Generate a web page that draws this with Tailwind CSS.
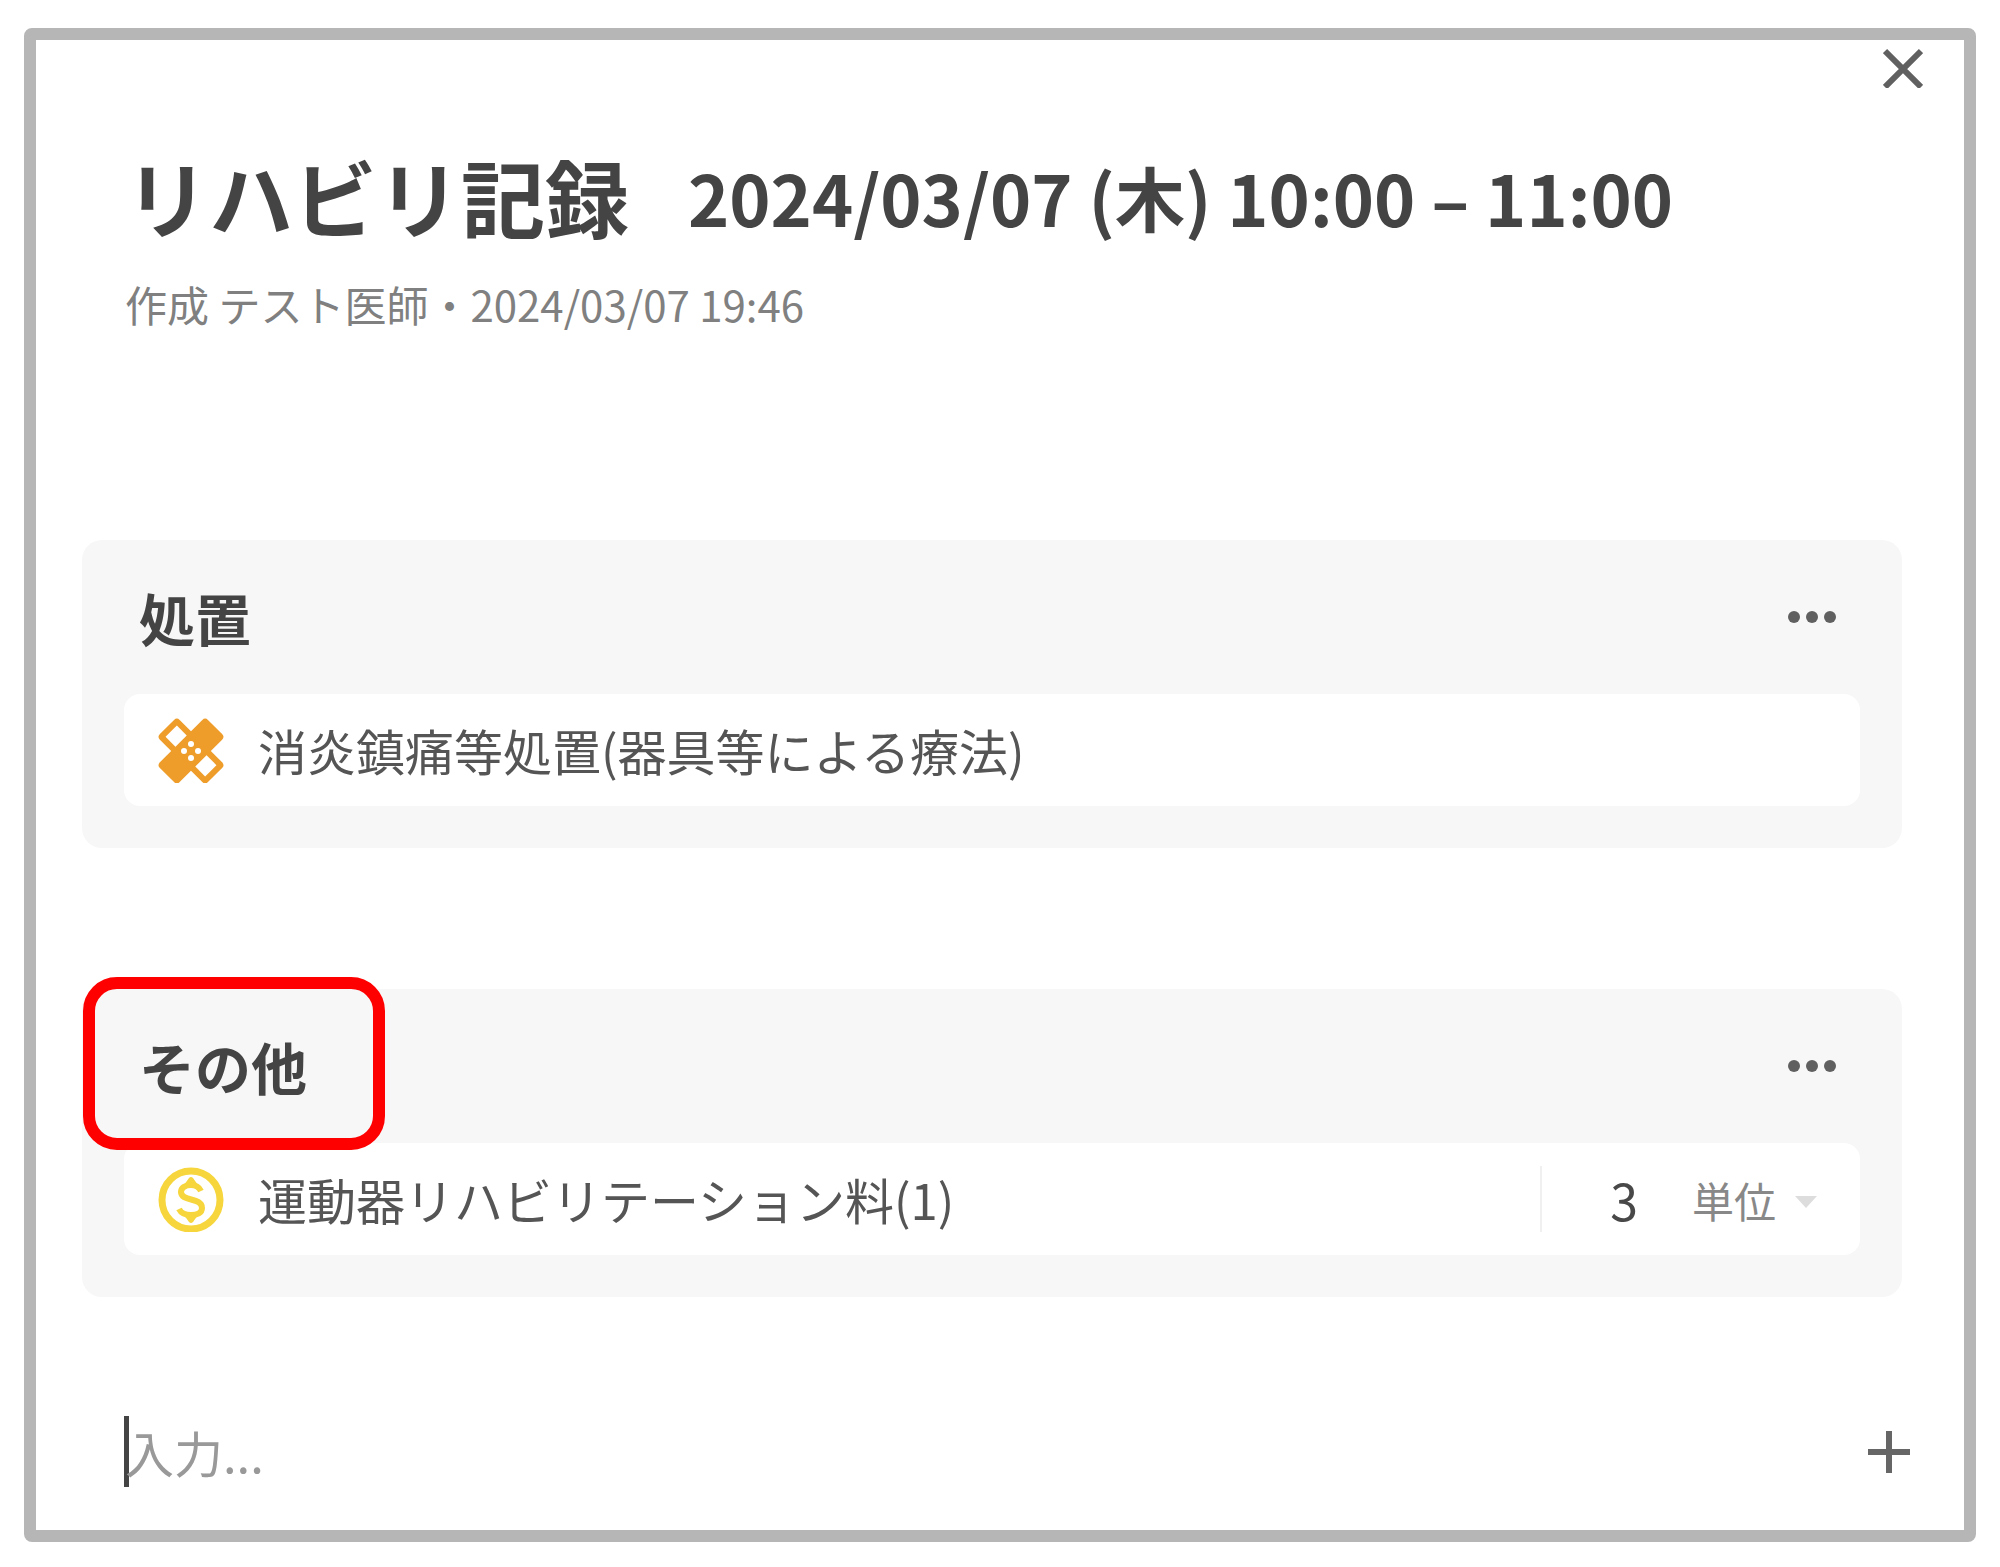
<!DOCTYPE html>
<html lang="ja">
<head>
    <meta charset="UTF-8" />
    <meta name="viewport" content="width=device-width, initial-scale=1.0" />
    <title>リハビリ記録</title>
    <script src="https://cdn.jsdelivr.net/npm/@tailwindcss/browser@4"></script>
    <style>
        body { font-family: 'Noto Sans CJK JP', sans-serif; }
    </style>
</head>
<body class="bg-white text-[#444] min-h-screen flex flex-col px-6 pt-7 pb-[25px]">

<main class="grow flex flex-col border-12 border-[#b6b6b6] rounded-lg">

    <!-- Close -->
    <div class="flex justify-end pr-[33px]">
        <button type="button" aria-label="閉じる" class="size-14 flex items-center justify-center text-[#606060]">
            <svg class="size-10" viewBox="0 0 40 40" fill="none" stroke="currentColor" stroke-width="6"><path d="M2 3L38 39M38 3L2 39" /></svg>
        </button>
    </div>

    <!-- Header -->
    <header class="pl-[89px] pt-[50px]">
        <h1 class="flex items-center gap-[59px] h-[100px] font-bold whitespace-nowrap">
            <span class="text-[84px]">リハビリ記録</span>
            <span class="text-[70px]">2024/03/07 (木) 10:00 – 11:00</span>
        </h1>
        <p class="mt-7 text-[42px] leading-[60px] text-[#808080]">作成 テスト医師・2024/03/07 19:46</p>
    </header>

    <!-- Orders -->
    <div class="mt-[206px] ml-[46px] mr-[62px] flex flex-col gap-[141px]">
        <section class="bg-[#f7f7f7] rounded-[20px] px-[42px] pb-[42px]">
            <div class="h-[154px] flex items-center justify-between pl-[15px] pr-5">
                <h2 class="text-[56px] font-bold">処置</h2>
                <button type="button" aria-label="メニュー" class="size-14 flex items-center justify-center text-[#606060]">
                    <svg class="w-12 h-3" viewBox="0 0 48 12" fill="currentColor"><circle cx="6" cy="6" r="6" /><circle cx="24" cy="6" r="6" /><circle cx="42" cy="6" r="6" /></svg>
                </button>
            </div>
            <div class="h-28 bg-white rounded-2xl flex items-center gap-[34px] pl-[34px]">
                <svg class="size-[66px]" viewBox="0 0 66 66">
                    <g transform="rotate(45 33 34)">
                        <rect x="-1" y="20" width="68" height="28" rx="4" fill="#ee9d2b" />
                        <rect x="5" y="26" width="15" height="16" fill="#fff" />
                        <rect x="46" y="26" width="15" height="16" fill="#fff" />
                    </g>
                    <rect x="-1" y="20" width="68" height="28" rx="4" transform="rotate(-45 33 34)" fill="#ee9d2b" />
                    <g fill="#fff">
                        <circle cx="33" cy="27" r="3" /><circle cx="26" cy="34" r="3" /><circle cx="40" cy="34" r="3" /><circle cx="33" cy="41" r="3" />
                    </g>
                </svg>
                <span class="text-[49px] text-[#555]">消炎鎮痛等処置(器具等による療法)</span>
            </div>
        </section>

        <section class="relative bg-[#f7f7f7] rounded-[20px] px-[42px] pb-[42px]">
            <!-- Highlight around the section title -->
            <div class="absolute left-px -top-3 w-[302px] h-[173px] border-12 border-[#f00] rounded-[34px] pointer-events-none"></div>
            <div class="h-[154px] flex items-center justify-between pl-[15px] pr-5">
                <h2 class="text-[56px] font-bold">その他</h2>
                <button type="button" aria-label="メニュー" class="size-14 flex items-center justify-center text-[#606060]">
                    <svg class="w-12 h-3" viewBox="0 0 48 12" fill="currentColor"><circle cx="6" cy="6" r="6" /><circle cx="24" cy="6" r="6" /><circle cx="42" cy="6" r="6" /></svg>
                </button>
            </div>
            <div class="h-28 bg-white rounded-2xl flex items-center gap-[34px] pl-[34px] pr-[43px]">
                <svg class="size-[66px]" viewBox="0 -1 66 66" fill="none" stroke="#f6d63c">
                    <circle cx="33" cy="33" r="29" stroke-width="7" />
                    <path stroke-width="6" d="M43 24C41 20 38 18 33 18C27 18 23 21 23 25C23 35 44 30 44 41C44 46 39 48 33 48C27 48 23 46 21 42" />
                    <path fill="#f6d63c" stroke="none" d="M26 18L31 11Q33 9 35 11L40 18ZM26 48L31 55Q33 57 35 55L40 48Z" />
                </svg>
                <label for="amount" class="grow text-[49px] text-[#555]">運動器リハビリテーション料(1)</label>
                <div class="flex items-center h-[66px] border-l-2 border-[#f0f0f0]">
                    <input id="amount" type="text" value="3" class="w-24 text-right text-[50px] text-[#484848] outline-none" />
                    <div class="flex items-center gap-[18px] pl-[54px]">
                        <select aria-label="単位" class="appearance-none text-[42px] text-[#888] outline-none">
                            <option>単位</option>
                        </select>
                        <svg class="w-[22px] h-[18px]" viewBox="0 0 22 18" fill="#ddd"><path d="M0 6H22L11 18Z" /></svg>
                    </div>
                </div>
            </div>
        </section>
    </div>

    <!-- New entry -->
    <div class="mt-[119px] pl-[88px] pr-[47px] flex items-center">
        <span class="w-[5px] h-[71px] -mr-1 bg-[#444]"></span>
        <input type="text" aria-label="入力" placeholder="入力..." class="grow h-[71px] text-[49px] placeholder:text-[#999] outline-none" />
        <button type="button" aria-label="追加" class="size-14 flex items-center justify-center text-[#666]">
            <svg class="size-[42px]" viewBox="0 0 42 42" fill="none" stroke="currentColor" stroke-width="6"><path d="M21 0V42M0 21H42" /></svg>
        </button>
    </div>
</main>

</body>
</html>
